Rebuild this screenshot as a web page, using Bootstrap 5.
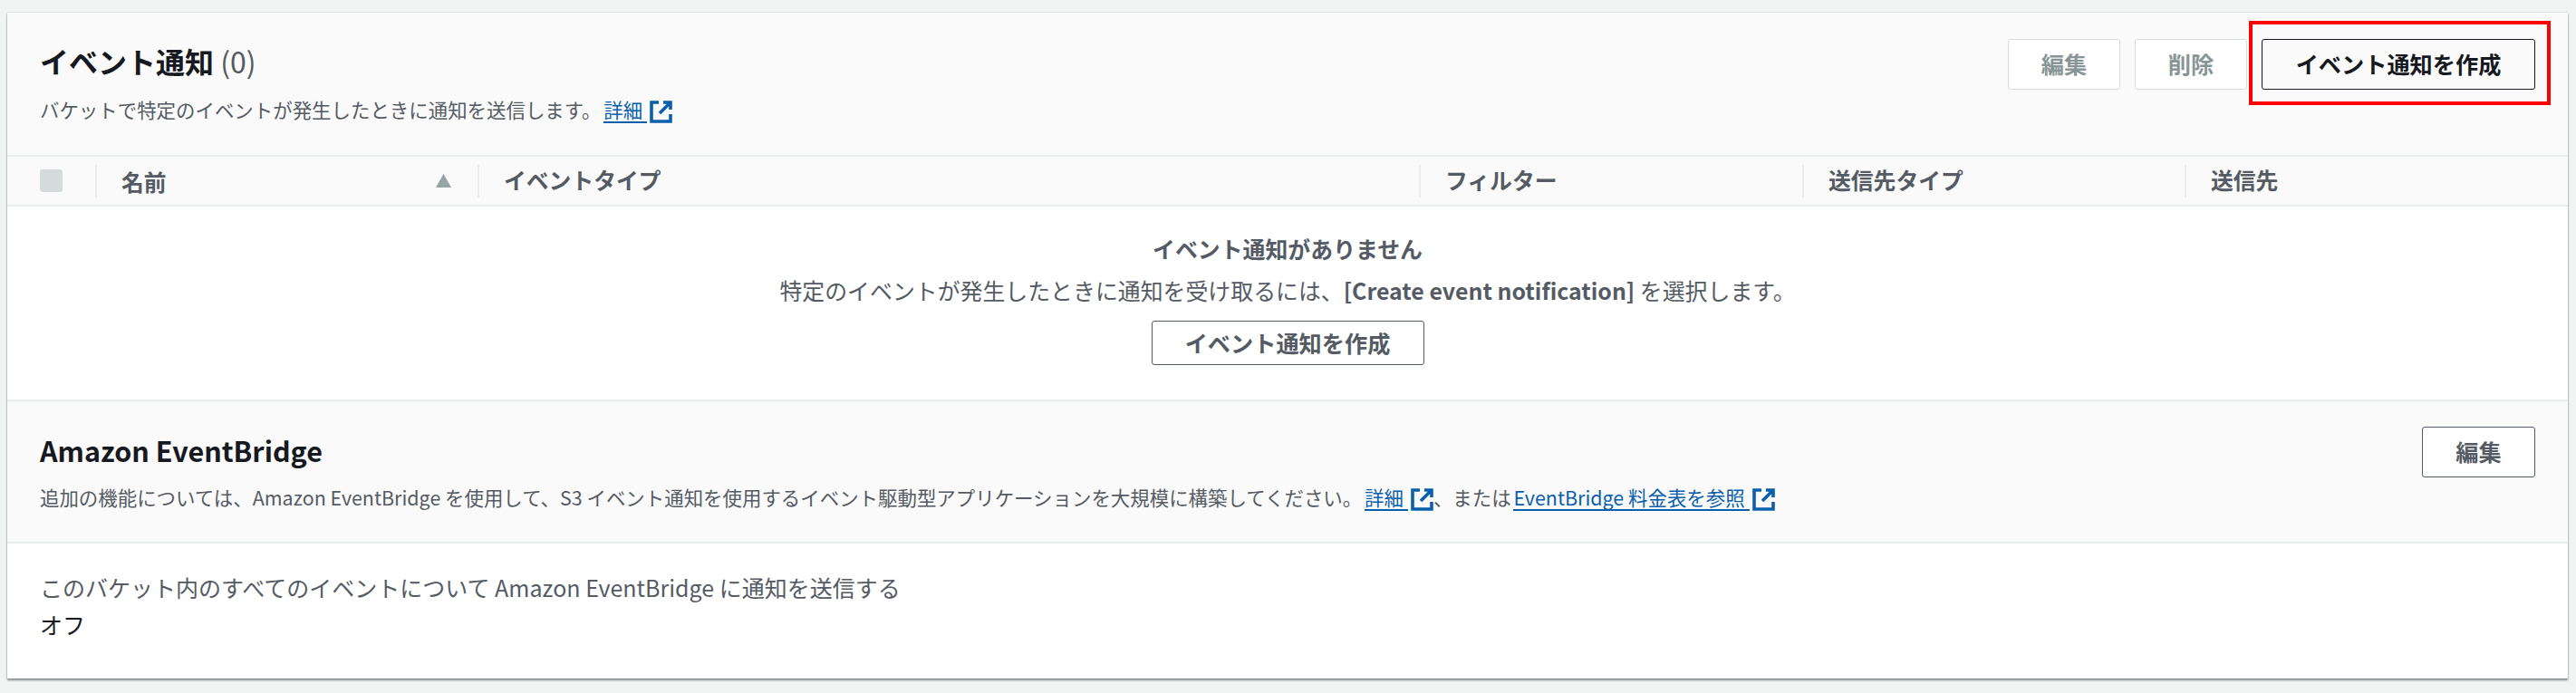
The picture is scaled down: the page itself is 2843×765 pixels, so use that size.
<!DOCTYPE html>
<html lang="ja">
<head>
<meta charset="utf-8">
<title>イベント通知</title>
<link rel="stylesheet" href="https://cdn.jsdelivr.net/npm/bootstrap@5.3.0/dist/css/bootstrap.min.css">
<style>
html,body{height:100%}
body{background:#f2f3f3;font-family:"Noto Sans CJK JP","Noto Sans",sans-serif;color:#545b64;padding:14px 9px 0 8px;overflow:hidden}
.panel{background:#fff;height:735px;box-shadow:0 2px 2px rgba(0,28,36,.45),0 0 2px rgba(0,28,36,.2)}
.sec-head{background:#fafafa;border-bottom:2px solid #eaeded;padding:29px 36px 0 36px}
.sec-one{height:159px}
.sec-two{height:157px;padding-top:28px}
.ttl{font-size:32px;line-height:44px;font-weight:700;color:#16191f;margin:2px 0 0}
.ttl span{font-weight:400;color:#545b64}
.ttl-latin{font-size:30.5px;margin-top:4px}
.desc{font-size:21.45px;line-height:30px;margin:17px 0 0;white-space:nowrap}
.desc-two{margin-top:15px}
.lnk{color:#0a5fad;text-decoration:none;border-bottom:2px solid #0a5fad;padding-right:5px;margin-left:-2px;display:inline-block;line-height:27px}
.ext{width:25px;height:25px;margin-left:3px;vertical-align:-6px;color:#0a5fad}
.aws{font-size:25.2px;line-height:1;font-weight:700;border-radius:3px;height:56px;white-space:nowrap;padding:0;display:inline-flex;align-items:center;justify-content:center}
.aws-off,.aws-off:disabled{width:124px;background:#fff;border:1.5px solid #d5dbdb;color:#879596;opacity:1}
.aws-main{width:302px;background:#fafafa;border:1.5px solid #16191f;color:#16191f}
.aws-line{background:#fff;border:1.5px solid #545b64;color:#545b64}
.aws-edit{width:125px}
.aws-make{width:301px;height:49px}
.red-frame{border:4px solid #f00;padding:16px 13px 13px 10px;margin:-20px -17px 0 -14px}
.cols{display:grid;grid-template-columns:97px 422px 1039px 423px 422px 1fr;height:55px;background:#fafafa;border-bottom:2px solid #eaeded;align-items:center;font-size:24.8px;font-weight:700;color:#545b64}
.cell{height:36px;border-left:2px solid #eaeded;padding-left:27px;line-height:32px;white-space:nowrap}
.cell-chk{padding-left:36px;display:flex}
.chk{width:25px;height:25px;background:#d5dbdb;border-radius:3px}
.tri{width:17px;height:15px;margin-right:29px;fill:#95a5a6}
.empty{height:215px;background:#fff;border-bottom:2px solid #eaeded;padding-top:26px;text-align:center}
.empty-t{font-size:24.9px;line-height:40px;font-weight:700}
.empty-b{font-size:24.9px;line-height:40px;margin:6px 0 14px}
.foot{padding:28px 36px 0;font-size:25px;line-height:40px}
.foot-v{color:#16191f;margin-top:1px}
</style>
</head>
<body>
<main class="panel">
  <section class="sec-head sec-one d-flex justify-content-between">
    <div>
      <h2 class="ttl">イベント通知 <span>(0)</span></h2>
      <p class="desc">バケットで特定のイベントが発生したときに通知を送信します。 <a class="lnk" href="#">詳細</a><svg class="ext" viewBox="0 0 25 25" fill="none" stroke="currentColor" stroke-width="3.6"><path d="M10 2H2v21h21v-8"/><path d="M15 2h8v8M23 2 11 14"/></svg></p>
    </div>
    <div class="d-flex gap-3 align-items-start">
      <button class="btn aws aws-off" disabled>編集</button>
      <button class="btn aws aws-off" disabled>削除</button>
      <div class="red-frame"><button class="btn aws aws-main">イベント通知を作成</button></div>
    </div>
  </section>
  <div class="cols">
    <div class="cell-chk"><span class="chk"></span></div>
    <div class="cell d-flex justify-content-between align-items-center"><span>名前</span><svg class="tri" viewBox="0 0 17 15"><path d="M8.5 0 17 15H0z"/></svg></div>
    <div class="cell">イベントタイプ</div>
    <div class="cell">フィルター</div>
    <div class="cell">送信先タイプ</div>
    <div class="cell">送信先</div>
  </div>
  <section class="empty">
    <div class="empty-t">イベント通知がありません</div>
    <p class="empty-b">特定のイベントが発生したときに通知を受け取るには、<b>[Create event notification]</b> を選択します。</p>
    <button class="btn aws aws-line aws-make">イベント通知を作成</button>
  </section>
  <section class="sec-head sec-two d-flex justify-content-between">
    <div>
      <h2 class="ttl ttl-latin">Amazon EventBridge</h2>
      <p class="desc desc-two">追加の機能については、Amazon EventBridge を使用して、S3 イベント通知を使用するイベント駆動型アプリケーションを大規模に構築してください。 <a class="lnk" href="#">詳細</a><svg class="ext" viewBox="0 0 25 25" fill="none" stroke="currentColor" stroke-width="3.6"><path d="M10 2H2v21h21v-8"/><path d="M15 2h8v8M23 2 11 14"/></svg>、または <a class="lnk" href="#">EventBridge 料金表を参照</a><svg class="ext" viewBox="0 0 25 25" fill="none" stroke="currentColor" stroke-width="3.6"><path d="M10 2H2v21h21v-8"/><path d="M15 2h8v8M23 2 11 14"/></svg></p>
    </div>
    <div><button class="btn aws aws-line aws-edit">編集</button></div>
  </section>
  <section class="foot">
    <div>このバケット内のすべてのイベントについて Amazon EventBridge に通知を送信する</div>
    <div class="foot-v">オフ</div>
  </section>
</main>
<script src="https://cdn.jsdelivr.net/npm/bootstrap@5.3.0/dist/js/bootstrap.bundle.min.js"></script>
</body>
</html>
